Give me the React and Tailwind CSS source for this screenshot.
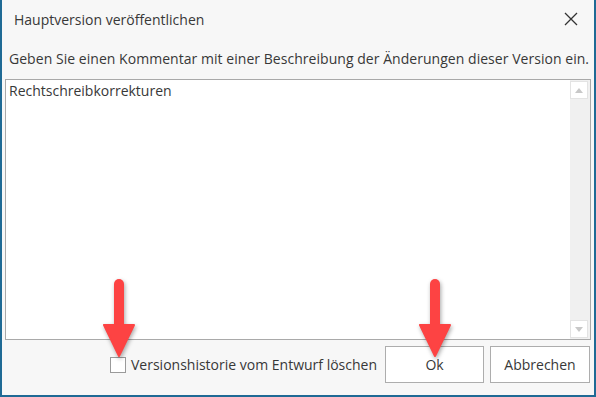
import React, { useState } from "react";

const font = { fontFamily: '"Open Sans", "Noto Sans", sans-serif' };

const RedArrow = ({ className }) => (
  <svg
    className={className}
    width="40"
    height="84"
    viewBox="0 0 40 84"
    style={{ filter: "drop-shadow(1px 2px 2px rgba(0,0,0,0.35))" }}
  >
    <line x1="20" y1="9" x2="20" y2="52" stroke="#fd4343" strokeWidth="10" strokeLinecap="round" />
    <path d="M5 50 L35 50 L20 81 Z" fill="#fd4343" strokeLinejoin="round" stroke="#fd4343" strokeWidth="2" />
  </svg>
);

export default function App() {
  const [comment, setComment] = useState("Rechtschreibkorrekturen");
  const [clearHistory, setClearHistory] = useState(false);

  return (
    <div
      className="relative w-[596px] h-[397px] bg-[#f7f7f7] border-l-2 border-r-2 border-b-2 border-[#1f6a95] flex flex-col text-[#383838] overflow-hidden"
      style={font}
    >
      {/* title bar */}
      <div className="h-[38px] flex items-center justify-between pl-[12px] pr-[16px]">
        <span className="text-[14px]">Hauptversion veröffentlichen</span>
        <svg width="14" height="14" viewBox="0 0 14 14" className="text-[#333]">
          <path d="M1 1 L13 13 M13 1 L1 13" stroke="currentColor" strokeWidth="1.3" />
        </svg>
      </div>

      <div className="h-[41px] flex items-center pl-[7px] text-[14px] tracking-[0.04px] whitespace-nowrap">
        Geben Sie einen Kommentar mit einer Beschreibung der Änderungen dieser Version ein.
      </div>

      {/* comment box */}
      <div className="mx-[3px] h-[261px] border border-[#a9a9a9] bg-white flex">
        <textarea
          value={comment}
          onChange={(e) => setComment(e.target.value)}
          className="flex-1 resize-none outline-none px-[3px] pt-[1px] text-[14px] leading-[20px] text-[#383838] bg-white"
          style={font}
        />
        <div className="w-[20px] bg-[#f0f0f0] flex flex-col justify-between py-[1px] pr-[1px]">
          <div className="h-[18px] w-[18px] bg-white border border-[#e3e3e3] flex items-center justify-center">
            <svg width="8" height="5" viewBox="0 0 8 5">
              <path d="M0 5 L4 0 L8 5 Z" fill="#c8c8c8" />
            </svg>
          </div>
          <div className="h-[18px] w-[18px] bg-white border border-[#e3e3e3] flex items-center justify-center">
            <svg width="8" height="5" viewBox="0 0 8 5">
              <path d="M0 0 L8 0 L4 5 Z" fill="#c8c8c8" />
            </svg>
          </div>
        </div>
      </div>

      {/* footer */}
      <div className="flex-1 flex items-center pr-[4px] pb-[6px]">
        <label className="ml-[108px] flex items-center gap-[5px] text-[14px] cursor-pointer">
          <span
            onClick={() => setClearHistory(!clearHistory)}
            className="w-[16px] h-[16px] border border-[#9a9a9a] bg-white flex items-center justify-center"
          >
            {clearHistory && (
              <svg width="10" height="10" viewBox="0 0 10 10">
                <path d="M1 5 L4 8 L9 2" stroke="#333" strokeWidth="1.5" fill="none" />
              </svg>
            )}
          </span>
          Versionshistorie vom Entwurf löschen
        </label>
        <button className="ml-auto w-[99px] h-[37px] border border-[#adadad] bg-white text-[14px]" style={font}>
          Ok
        </button>
        <button className="ml-[6px] w-[100px] h-[37px] border border-[#adadad] bg-white text-[14px]" style={font}>
          Abbrechen
        </button>
      </div>

      {/* annotation arrows */}
      <RedArrow className="absolute left-[97px] top-[275px] pointer-events-none" />
      <RedArrow className="absolute left-[413px] top-[275px] pointer-events-none" />
    </div>
  );
}
